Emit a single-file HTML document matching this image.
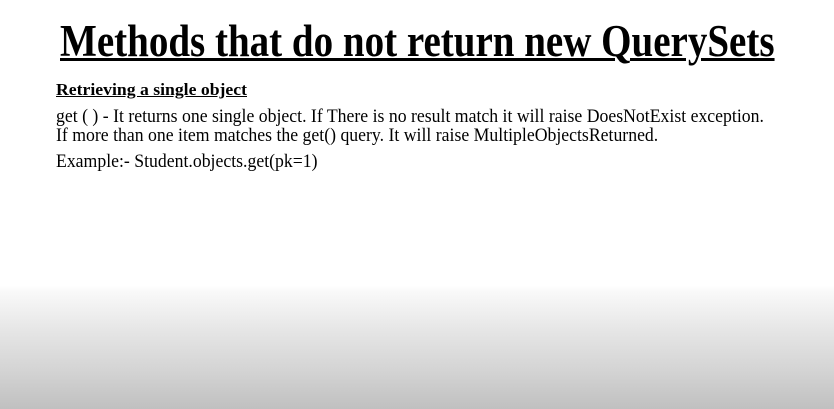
<!DOCTYPE html>
<html><head><meta charset="utf-8"><style>
html,body{margin:0;padding:0}
body{width:834px;height:409px;overflow:hidden;position:relative;font-family:"Liberation Serif",serif;color:#000;
background:linear-gradient(to bottom,#fff 0,#fff 286px,#f9f9f9 292px,#e6e6e6 330px,#d4d4d4 370px,#c0c0c0 409px);}
.t{position:absolute;left:60px;top:15px;font-size:45px;font-weight:bold;text-decoration:underline;text-decoration-thickness:3px;white-space:nowrap;transform:scaleX(0.867);transform-origin:0 0}
.h{position:absolute;left:56px;top:80px;font-size:17px;font-weight:bold;text-decoration:underline;white-space:nowrap;transform:scaleX(1.04);transform-origin:0 0}
.p{position:absolute;left:56px;top:108px;font-size:18.5px;line-height:19px;white-space:nowrap;transform:scaleX(0.958);transform-origin:0 0}
.e{position:absolute;left:56px;top:152px;font-size:18.5px;white-space:nowrap;transform:scaleX(0.958);transform-origin:0 0}
</style></head><body>
<div class="t">Methods that do not return new QuerySets</div>
<div class="h">Retrieving a single object</div>
<div class="p">get ( ) - It returns one single object. If There is no result match it will raise DoesNotExist exception.<br>If more than one item matches the get() query. It will raise MultipleObjectsReturned.</div>
<div class="e">Example:- Student.objects.get(pk=1)</div>
</body></html>
